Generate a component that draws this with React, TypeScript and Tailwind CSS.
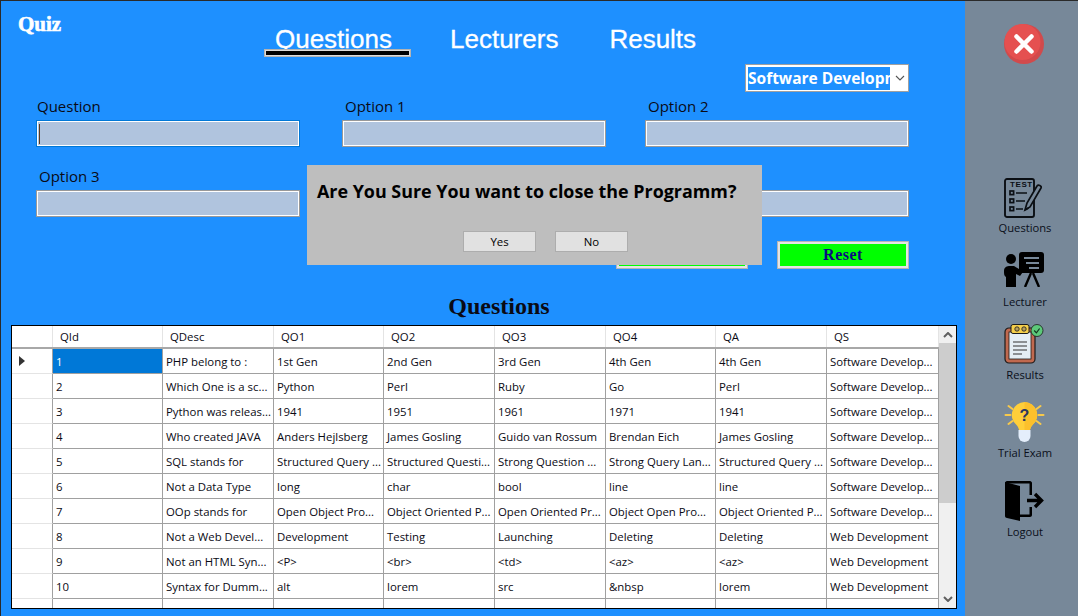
const seg = "font-['Open_Sans','Noto_Sans',sans-serif]";

const columns = ['QId', 'QDesc', 'QO1', 'QO2', 'QO3', 'QO4', 'QA', 'QS'];
const widths = ['w-[110px]', 'w-[111px]', 'w-[110px]', 'w-[111px]', 'w-[111px]', 'w-[110px]', 'w-[111px]', 'w-[112px]'];
const SD = 'Software Develop...';
const WD = 'Web Development';
const rows = [
  ['1', 'PHP belong to :', '1st Gen', '2nd Gen', '3rd Gen', '4th Gen', '4th Gen', SD],
  ['2', 'Which One is a sc...', 'Python', 'Perl', 'Ruby', 'Go', 'Perl', SD],
  ['3', 'Python was releas...', '1941', '1951', '1961', '1971', '1941', SD],
  ['4', 'Who created JAVA', 'Anders Hejlsberg', 'James Gosling', 'Guido van Rossum', 'Brendan Eich', 'James Gosling', SD],
  ['5', 'SQL stands for', 'Structured Query ...', 'Structured Questi...', 'Strong Question ...', 'Strong Query Lan...', 'Structured Query ...', SD],
  ['6', 'Not a Data Type', 'long', 'char', 'bool', 'line', 'line', SD],
  ['7', 'OOp stands for', 'Open Object Pro...', 'Object Oriented P...', 'Open Oriented Pr...', 'Object Open Pro...', 'Object Oriented P...', SD],
  ['8', 'Not a Web Devel...', 'Development', 'Testing', 'Launching', 'Deleting', 'Deleting', WD],
  ['9', 'Not an HTML Syn...', '<P>', '<br>', '<td>', '<az>', '<az>', WD],
  ['10', 'Syntax for Dumm...', 'alt', 'lorem', 'src', '&nbsp', 'lorem', WD],
  ['11', 'Lorem ipsum used', 'The Dummy text', 'Popular Site', 'Latin Quality', 'Dummy backgr...', 'The Dummy text', WD],
];

function InputBox({ focus }: { focus?: boolean }) {
  return (
    <div className={`h-[27px] w-full border bg-[#b0c4de] ${focus ? 'border-[#0078d7]' : 'border-[#999999]'}`}>
      <div className="flex h-full w-full items-center border border-white pl-[1px]">
        {focus && <div className="h-[20px] w-[1px] bg-[#5a3a20]" />}
      </div>
    </div>
  );
}

function Field({ label, focus, className, pad }: { label: string; focus?: boolean; className: string; pad: string }) {
  return (
    <div className={`flex flex-col ${className}`}>
      <span className={`${seg} ${pad} h-[24px] text-[15px] leading-[20px] text-[#0a0a14]`}>{label}</span>
      <InputBox focus={focus} />
    </div>
  );
}

function GreenButton({ className, children }: { className: string; children?: React.ReactNode }) {
  return (
    <div className={`h-[28px] border border-[#b4b4b4] ${className}`}>
      <div className="flex h-full w-full items-center justify-center border-2 border-[#e4e4e4] bg-[#00ff00] font-['Liberation_Serif',serif] text-[16px] font-bold tracking-[0.5px] text-[#0a0a80]">
        {children}
      </div>
    </div>
  );
}

function CloseIcon() {
  return (
    <svg width="40" height="40" viewBox="0 0 40 40">
      <circle cx="20" cy="20" r="20" fill="#d14a4c" />
      <circle cx="18.5" cy="18" r="18" fill="#e55050" />
      <path d="M12.5 12.5l15 15M27.5 12.5l-15 15" stroke="#fff" strokeWidth="4.5" strokeLinecap="round" />
    </svg>
  );
}

function TestIcon() {
  return (
    <svg width="39" height="40" viewBox="0 0 39 40" fill="none" stroke="#0b0f14" strokeWidth="1.7">
      <rect x="1" y="1" width="29" height="38" rx="2" fill="#778899" strokeWidth="1.9" />
      <text x="6" y="9" fontSize="8" fontWeight="800" fontFamily="'Liberation Sans',sans-serif" fill="#0b0f14" stroke="none" letterSpacing="0.6">TEST</text>
      <rect x="6" y="13" width="3.6" height="3.6" />
      <rect x="6" y="21" width="3.6" height="3.6" />
      <rect x="6" y="29" width="3.6" height="3.6" />
      <path d="M12 15h11M12 23h9M12 31h7" />
      <path d="M21 32l2-7L33 8c1-2 5 0 4 2L26 29z" fill="#778899" />
      <path d="M21 32l3.5-2" />
    </svg>
  );
}

function LecturerIcon() {
  return (
    <svg width="40" height="35" viewBox="0 0 40 35">
      <circle cx="7" cy="7" r="5" fill="#000" />
      <path d="M0 19c0-4 3-5 6-5h4l5 3 6-6 3 2-8 11-4-2v13H2V25c-2-1-2-3-2-6z" fill="#000" />
      <rect x="15" y="0" width="25" height="21" rx="3" fill="#000" />
      <path d="M20 6h15M22 11h13M25 16h10" stroke="#778899" strokeWidth="2" />
      <path d="M27 21l-6 14M29 21l6 14" stroke="#000" strokeWidth="2.4" />
    </svg>
  );
}

function ResultsIcon() {
  return (
    <svg width="40" height="40" viewBox="0 0 40 40">
      <rect x="1" y="4" width="30" height="35" rx="4" fill="#c0694f" stroke="#1b1b1b" strokeWidth="1.2" />
      <rect x="5" y="8" width="22" height="27" fill="#e4edf4" stroke="#1b1b1b" strokeWidth="0.8" />
      <path d="M9 18h14M9 22h14M9 26h14M9 30h9" stroke="#333" strokeWidth="1.2" />
      <rect x="7" y="0.5" width="18" height="9" rx="2" fill="#f5cf4b" stroke="#1b1b1b" strokeWidth="1" />
      <circle cx="13" cy="5" r="2.2" fill="#b9a05a" stroke="#1b1b1b" strokeWidth="0.8" />
      <circle cx="20" cy="5" r="2.2" fill="#b9a05a" stroke="#1b1b1b" strokeWidth="0.8" />
      <circle cx="33" cy="6.5" r="6" fill="#5cc97a" stroke="#1b1b1b" strokeWidth="0.8" />
      <path d="M30.2 6.5l2.2 2.3 3.2-4.3" stroke="#12351f" strokeWidth="1.2" fill="none" />
    </svg>
  );
}

function BulbIcon() {
  return (
    <svg width="41" height="40" viewBox="0 0 40 40">
      <path d="M20 0a13 13 0 0 0-8 23c2 2 2 4 3 6h10c1-2 1-4 3-6A13 13 0 0 0 20 0z" fill="#ffcf3a" />
      <path d="M20 0a13 13 0 0 1 8 23c-2 2-2 4-3 6h-5z" fill="#fcc02c" />
      <path d="M14 28h12v6a6 6 0 0 1-12 0z" fill="#e4eefb" />
      <text x="20" y="19" textAnchor="middle" fontSize="16" fontWeight="800" fontFamily="'Liberation Sans',sans-serif" fill="#2b3560">?</text>
      <path d="M1 13h5M34 13h5M4 4l4 3M36 4l-4 3M4 22l4-3M36 22l-4-3" stroke="#f8c94a" strokeWidth="2" strokeLinecap="round" />
    </svg>
  );
}

function LogoutIcon() {
  return (
    <svg width="40" height="40" viewBox="0 0 40 40">
      <path d="M1 2c0-1 1-2 2-2h23c1 0 2 1 2 2v12h-2.5V2.500H16L1 2.500z" fill="#000" />
      <path d="M1 1l15 4v35L3 37c-1 0-2-1-2-2z" fill="#000" />
      <path d="M16 33.500h9.500V26H28v8c0 1-1 2-2 2H16z" fill="#000" />
      <path d="M23 19.500h14M31 13l6.500 6.500L31 26" stroke="#000" strokeWidth="3.4" fill="none" />
    </svg>
  );
}

function SideItem({ icon, label, className, gap }: { icon: React.ReactNode; label: string; className: string; gap: string }) {
  return (
    <div className={`flex flex-col items-center ${className}`}>
      {icon}
      <span className={`${seg} ${gap} ml-[2px] text-[11.2px] leading-[14px] text-[#0a0f1a]`}>{label}</span>
    </div>
  );
}

export default function App() {
  return (
    <div className="relative flex h-[616px] w-[1078px] overflow-hidden bg-[#1e90ff]">
      <div className="flex h-full w-[965px] flex-col">
        {/* header */}
        <div className="flex h-[64px]">
          <div className="w-[264px] pl-[18px] pt-[11px] font-['Liberation_Serif',serif] text-[21px] font-bold leading-[26px] text-white [-webkit-text-stroke:0.6px_white]">
            Quiz
          </div>
          <div className="flex flex-col pt-[24px]">
            <span className="w-[147px] pr-[8px] text-center font-['Liberation_Sans',sans-serif] text-[26px] leading-[30px] text-white [-webkit-text-stroke:0.3px_white]">Questions</span>
            <div className="mt-[-5px] h-[8px] w-[147px] border border-[#b4b4b4] bg-[#dcdcdc] p-[1px]">
              <div className="h-full w-full bg-black" />
            </div>
          </div>
          <span className="ml-[39px] mt-[24px] font-['Liberation_Sans',sans-serif] text-[26px] leading-[30px] text-white [-webkit-text-stroke:0.3px_white]">Lecturers</span>
          <span className="ml-[51px] mt-[24px] font-['Liberation_Sans',sans-serif] text-[26px] leading-[30px] text-white [-webkit-text-stroke:0.3px_white]">Results</span>
        </div>

        {/* combo */}
        <div className="flex h-[28px] justify-end pr-[56px]">
          <div className="flex h-[28px] w-[164px] items-center border border-[#a0a0a0] bg-white pl-[2px]">
            <div className={`${seg} h-[23px] w-[142px] overflow-hidden whitespace-nowrap bg-[#1e90ff] text-[15.5px] font-bold leading-[23px] text-white`}>
              Software Development
            </div>
            <svg className="ml-[5px]" width="10" height="6" viewBox="0 0 10 6" fill="none" stroke="#555" strokeWidth="1.1">
              <path d="M1 1l4 4 4-4" />
            </svg>
          </div>
        </div>

        {/* form rows */}
        <div className="mt-[4px] flex h-[51px] pl-[36px]">
          <Field label="Question" focus pad="pl-[1px]" className="w-[264px]" />
          <Field label="Option 1" pad="pl-[3px]" className="ml-[42px] w-[264px]" />
          <Field label="Option 2" pad="pl-[3px]" className="ml-[39px] w-[264px]" />
        </div>
        <div className="mt-[19px] flex h-[51px] pl-[36px]">
          <Field label="Option 3" pad="pl-[3px]" className="w-[264px]" />
          <div className="ml-[42px] w-[264px]" />
          <div className="ml-[39px] mt-[24px] w-[264px]">
            <InputBox />
          </div>
        </div>

        {/* buttons */}
        <div className="mt-[24px] flex h-[28px] justify-end pr-[56px]">
          <GreenButton className="w-[132px]" />
          <GreenButton className="ml-[29px] w-[132px]">Reset</GreenButton>
        </div>

        {/* title */}
        <div className="mt-[20px] h-[34px] pl-[33px] text-center font-['Liberation_Serif',serif] text-[24px] font-bold leading-[34px] text-[#0a0a14]">
          Questions
        </div>

        {/* grid */}
        <div className="ml-[11px] mt-[2px] flex h-[284px] w-[946px] overflow-hidden border border-black bg-white">
          <div className={`${seg} h-full w-[927px] overflow-hidden text-[11.4px] text-[#0a0a14]`}>
            <div className="flex h-[23px] border-b-2 border-[#a8a8a8]">
              <div className="w-[41px] shrink-0 border-r border-[#e4e4e4]" />
              {columns.map((c, i) => (
                <div key={c} className={`${widths[i]} shrink-0 border-r border-[#e4e4e4] pl-[7px] leading-[22px]`}>
                  {c}
                </div>
              ))}
            </div>
            {rows.map((r, ri) => (
              <div key={r[0]} className="flex h-[25px]">
                <div className="flex w-[41px] shrink-0 items-center border-r border-b border-r-[#a0a0a0] border-b-[#e4e4e4] pl-[7px]">
                  {ri === 0 && <div className="h-0 w-0 border-y-[5px] border-l-[6px] border-y-transparent border-l-[#333]" />}
                </div>
                {r.map((v, i) => (
                  <div
                    key={i}
                    className={`${widths[i]} shrink-0 overflow-hidden whitespace-nowrap border-r border-b border-[#a0a0a0] pl-[3px] leading-[26px] ${ri === 0 && i === 0 ? 'bg-[#0078d7] text-white' : ''}`}
                  >
                    {v}
                  </div>
                ))}
              </div>
            ))}
          </div>
          <div className="flex h-full w-[17px] flex-col items-center bg-[#f0f0f0]">
            <svg className="mt-[6px]" width="10" height="6" viewBox="0 0 10 6" fill="none" stroke="#606060" strokeWidth="2"><path d="M1 5l4-4 4 4" /></svg>
            <div className="mt-[5px] h-[160px] w-full bg-[#cdcdcd]" />
            <div className="flex-1" />
            <svg className="mb-[6px]" width="10" height="6" viewBox="0 0 10 6" fill="none" stroke="#606060" strokeWidth="2"><path d="M1 1l4 4 4-4" /></svg>
          </div>
        </div>
      </div>

      {/* sidebar */}
      <div className="flex h-full w-[113px] flex-col items-center bg-[#778899] pl-[5px]">
        <div className="mt-[24px]"><CloseIcon /></div>
        <SideItem icon={<TestIcon />} label="Questions" gap="mt-[3px]" className="mt-[114px]" />
        <SideItem icon={<LecturerIcon />} label="Lecturer" gap="mt-[8px]" className="mt-[17px]" />
        <SideItem icon={<ResultsIcon />} label="Results" gap="mt-[4px]" className="mt-[15px]" />
        <SideItem icon={<BulbIcon />} label="Trial Exam" gap="mt-[4px]" className="mt-[20px]" />
        <SideItem icon={<LogoutIcon />} label="Logout" gap="mt-[4px]" className="mt-[21px]" />
      </div>

      {/* window edge */}
      <div className="absolute left-0 top-0 h-[1px] w-full bg-[#2a2a2a]" />
      <div className="absolute left-0 top-0 h-full w-[1px] bg-[#2a2a2a]" />

      {/* dialog */}
      <div className="absolute left-[307px] top-[165px] flex h-[100px] w-[455px] flex-col bg-[#bebebe]">
        <div className={`${seg} pl-[10px] pt-[13px] text-[17.9px] font-bold leading-[26px] text-black`}>
          Are You Sure You want to close the Programm?
        </div>
        <div className="mt-[27px] flex pl-[156px]">
          <button className={`${seg} h-[21px] w-[73px] border border-[#adadad] bg-[#e1e1e1] text-[11.4px] leading-[18px] text-black`}>Yes</button>
          <button className={`${seg} ml-[19px] h-[21px] w-[73px] border border-[#adadad] bg-[#e1e1e1] text-[11.4px] leading-[18px] text-black`}>No</button>
        </div>
      </div>
    </div>
  );
}
